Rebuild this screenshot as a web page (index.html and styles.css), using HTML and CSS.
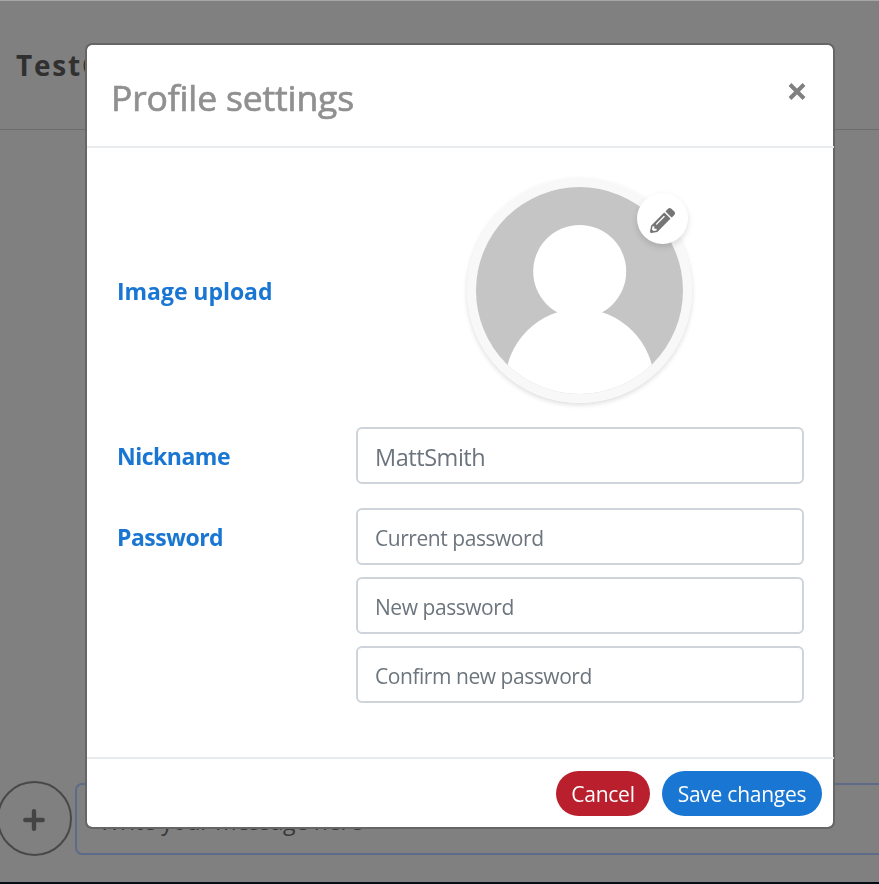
FILE: index.html
```html
<!DOCTYPE html>
<html lang="en">
<head>
<meta charset="utf-8">
<title>Profile settings</title>
<link rel="stylesheet" href="styles.css">
</head>
<body>
<div class="chat">
  <header class="chat-header"><span class="chat-name">TestChat</span></header>
  <main class="messages"></main>
  <div class="composer">
    <div class="add">
      <svg width="22" height="22" viewBox="0 0 22 22"><path d="M11 2.3v17.4M2.3 11h17.4" stroke="#444" stroke-width="4.4" stroke-linecap="round"/></svg>
    </div>
    <div class="message-box"><span class="message-hint">Write your message here</span></div>
  </div>
</div>
<div class="overlay">
  <section class="modal">
    <header class="modal-header">
      <h1 class="title">Profile settings</h1>
      <svg class="close" width="18" height="18" viewBox="0 0 18 18"><path d="M2 1.5l14 14M16 1.5L2 15.5" stroke="#808080" stroke-width="4"/></svg>
    </header>
    <div class="modal-body">
      <div class="row row-image">
        <div class="label">Image upload</div>
        <div class="avatar">
          <svg class="avatar-image" viewBox="0 0 207 207">
            <rect width="207" height="207" fill="#c5c5c5"/>
            <circle cx="103.7" cy="84.5" r="46.5" fill="#fff"/>
            <circle cx="103.7" cy="196.3" r="74.4" fill="#fff"/>
          </svg>
          <div class="edit">
            <svg width="25" height="25" viewBox="0 0 512 512"><path fill="#757575" d="M497.9 142.1l-46.1 46.1c-4.7 4.7-12.3 4.7-17 0l-111-111c-4.7-4.7-4.7-12.3 0-17l46.1-46.1c18.7-18.7 49.1-18.7 67.9 0l60.1 60.1c18.8 18.7 18.8 49.1 0 67.9zM284.2 99.8L21.6 362.4.4 483.9c-2.9 16.4 11.4 30.6 27.8 27.8l121.5-21.3 262.6-262.6c4.7-4.7 4.7-12.3 0-17l-111-111c-4.8-4.7-12.4-4.7-17.1 0zM124.1 339.9c-5.5-5.5-5.5-14.3 0-19.8l154-154c5.5-5.5 14.3-5.5 19.8 0s5.5 14.3 0 19.8l-154 154c-5.5 5.5-14.3 5.5-19.8 0zM88 424h48v36.3l-64.5 11.3-31.1-31.1L51.7 376H88v48z"/></svg>
          </div>
        </div>
      </div>
      <div class="row">
        <div class="label label-tight">Nickname</div>
        <div class="fields"><div class="field field-value">MattSmith</div></div>
      </div>
      <div class="row">
        <div class="label label-tight">Password</div>
        <div class="fields">
          <div class="field">Current password</div>
          <div class="field">New password</div>
          <div class="field">Confirm new password</div>
        </div>
      </div>
    </div>
    <footer class="modal-footer">
      <button class="button cancel">Cancel</button>
      <button class="button save">Save changes</button>
    </footer>
  </section>
</div>
</body>
</html>
```
FILE: styles.css
```css
* { box-sizing: border-box; }
body {
  margin: 0;
  height: 884px;
  overflow: hidden;
  font-family: "Open Sans", "Noto Sans", sans-serif;
}
svg { display: block; }
.chat {
  height: 884px;
  display: flex;
  flex-direction: column;
  background: #808080;
  border-top: 1px solid #a5a7a7;
  border-bottom: 2px solid #080c17;
}
.chat-header {
  height: 129px;
  padding: 44px 16px 0;
  border-bottom: 1px solid #6c6c6c;
}
.chat-name {
  display: block;
  font-size: 28px;
  line-height: 40px;
  font-weight: 700;
  letter-spacing: 1.8px;
  color: #303030;
}
.messages { flex: 1; }
.composer {
  height: 75px;
  margin-bottom: 26px;
  display: flex;
  align-items: center;
}
.add {
  flex: none;
  width: 75px;
  height: 75px;
  margin-left: -3px;
  border: 2px solid #484848;
  border-radius: 50%;
  display: flex;
  align-items: center;
  justify-content: center;
  padding: 3px 2px 0 0;
}
.message-box {
  flex: 1;
  height: 72px;
  margin-left: 3px;
  padding: 18px 22px;
  border: 2px solid #5d6b88;
  border-right: 0;
  border-radius: 7px 0 0 7px;
}
.message-hint {
  display: block;
  font-size: 23px;
  line-height: 36px;
  letter-spacing: -0.2px;
  color: #383838;
}
.overlay {
  position: fixed;
  inset: 0;
  padding: 43px 0 0 85px;
}
.modal {
  width: 750px;
  height: 786px;
  display: flex;
  flex-direction: column;
  background: #fff;
  background-clip: padding-box;
  border: 2px solid #666;
  border-radius: 7px;
}
.modal-header {
  height: 103px;
  margin-right: -1px;
  padding: 26px 28px 0 24px;
  display: flex;
  justify-content: space-between;
  border-bottom: 2px solid #e9ecef;
}
.title {
  margin: 0;
  font-size: 35.5px;
  line-height: 53px;
  font-weight: 500;
  letter-spacing: -0.15px;
  color: #909090;
  -webkit-text-stroke: 0.7px #909090;
}
.close { margin-top: 12px; }
.modal-body {
  flex: 1;
  padding: 30px 29px 0 30px;
  display: flex;
  flex-direction: column;
  gap: 24px;
}
.row {
  display: grid;
  grid-template-columns: 239px 448px;
}
.row-image { align-items: center; }
.label {
  font-size: 23px;
  line-height: 36px;
  font-weight: 700;
  letter-spacing: -0.05px;
  color: #1976d2;
  padding-top: 11px;
}
.label-tight { letter-spacing: -0.5px; }
.row-image .label { padding-top: 0; }
.avatar {
  position: relative;
  justify-self: center;
  margin-right: 2px;
  width: 225px;
  height: 225px;
  border: 9px solid #f8f8f8;
  border-radius: 50%;
  box-shadow: 0 2px 5px rgba(0, 0, 0, 0.14);
}
.avatar-image {
  width: 207px;
  height: 207px;
  border-radius: 50%;
}
.edit {
  position: absolute;
  top: 6px;
  right: -5px;
  width: 51px;
  height: 51px;
  border-radius: 50%;
  background: #fff;
  box-shadow: 0 3px 6px rgba(0, 0, 0, 0.13);
  display: flex;
  align-items: center;
  justify-content: center;
  padding-top: 3px;
}
.fields {
  display: flex;
  flex-direction: column;
  gap: 12px;
}
.field {
  height: 57px;
  padding: 10px 17px;
  border: 2px solid #ced4da;
  border-radius: 6px;
  font-size: 21px;
  line-height: 36px;
  letter-spacing: -0.45px;
  color: #6c757d;
}
.field-value {
  font-size: 23.5px;
  line-height: 37px;
}
.modal-footer {
  height: 70px;
  margin-right: -1px;
  padding: 12px 12px 0;
  display: flex;
  justify-content: flex-end;
  gap: 12px;
  border-top: 2px solid #e9ecef;
}
.button {
  height: 45px;
  padding: 0;
  border: 0;
  border-radius: 22.5px;
  color: #fff;
  font-family: inherit;
  font-size: 21px;
  line-height: 46px;
  letter-spacing: -0.25px;
  white-space: nowrap;
}
.cancel { width: 94px; background: #ba1f2d; }
.save { width: 160px; background: #1976d2; }
```
